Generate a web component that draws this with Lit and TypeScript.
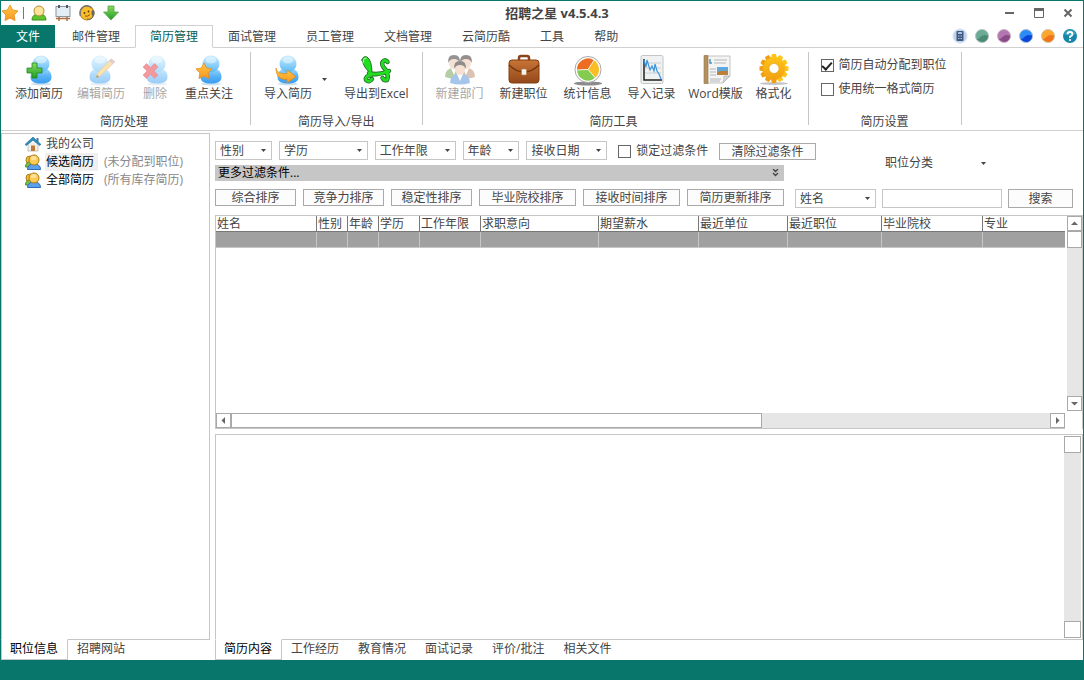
import { LitElement, html, svg, css, nothing, type SVGTemplateResult } from "lit";
import { customElement, state } from "lit/decorators.js";
import { classMap } from "lit/directives/class-map.js";
import { styleMap } from "lit/directives/style-map.js";

const person = (cx: number) => svg`
  <ellipse cx=${cx} cy="30" rx="10" ry="1.500" fill="#9cc4dc" opacity=".5"/>
  <path d=${`M${cx - 10.5} 23 C${cx - 10.5} 17 ${cx - 6} 14 ${cx} 14 S${cx + 10.5} 17 ${cx + 10.5} 23 C${cx + 10.5} 28 ${cx + 6} 29.5 ${cx} 29.5 S${cx - 10.5} 28 ${cx - 10.5} 23Z`} fill="url(#body)"/>
  <circle cx=${cx} cy="10" r="8.500" fill="url(#head)"/>
  <ellipse cx=${cx} cy="6" rx="5.500" ry="3.500" fill="#fff" opacity=".45"/>`;

const gold = (x: number, y: number, k: number) => svg`
  <path transform=${`translate(${x} ${y}) scale(${k})`} d="M8 0 L10.600 5 16 5.900 12.200 9.900 13 15.600 8 13.100 3 15.600 3.800 9.900 0 5.900 5.400 5Z" fill="url(#gold)" stroke="#e88a1c" stroke-width=".8" stroke-linejoin="round"/>`;

const smallUser = (hair: string, coat: string, x: number, y: number, w: number) => svg`
  <path d=${`M${x - w} ${y + 14} q0 -9 ${w} -9 t${w} 9 q${-w} 3 ${-2 * w} 0Z`} fill=${coat}/>
  <path d=${`M${x - 3} ${y + 5} l3 7 3 -7Z`} fill="#fff"/>
  <ellipse cx=${x} cy=${y} rx="5" ry="6" fill="#eec3a4"/>
  <path d=${`M${x - 5.5} ${y} q-1.5 -8 5.5 -8 t5.5 8 q-1 -4 -5.5 -4 t-5.500 4Z`} fill=${hair}/>`;

const SWIRL = "M9 19Q18 22 29 17M28 18Q20 11 23 7.500Q26 5 27.500 8M11 21Q5 22 6 26Q9 29 12 25M26 18Q29 22 27 26Q24 27 22.500 24";

const ICONS: Record<string, SVGTemplateResult> = {
  add: svg`${person(18)}<path d="M8 10h5v5h5v5h-5v5H8v-5H3v-5h5Z" transform="translate(1 -1)" fill="url(#green)" stroke="#1e8a1e" stroke-width=".8"/>`,
  edit: svg`${person(15)}<path d="M11 24l1.500-5L26 5l3.500 3L16 21.500Z" fill="#f5c869" stroke="#c79a4a" stroke-width=".8"/><path d="M24 7l2.500-2.500 3.500 3L27.500 10Z" fill="#c99ba5"/><path d="M11 24l1-3.200 2.200 2Z" fill="#444"/>`,
  remove: svg`${person(18)}<path d="M4 13l3.500-3.500 4 4 4-4L19 13l-4 4 4 4-3.500 3.500-4-4-4 4L4 21l4-4Z" fill="#e8343c" stroke="#c81c28" stroke-width=".6"/>`,
  star: svg`${person(18)}${gold(3, 9, 1)}`,
  import: svg`${person(16)}<path d="M4 14c1 5 5 6 11 5.500V16l9 6.500-9 6.500v-3.500C8 26 4 22 4 14Z" fill="url(#gold)" stroke="#d98a10" stroke-width=".7"/>`,
  excel: svg`<g stroke-linecap="round" stroke-linejoin="round"><path d=${SWIRL} fill="none" stroke="#28702a" stroke-width="4.500"/><path d="M2 6Q3 1.500 7 3Q12 6 12 20Q4 15 2 6Z" fill="#1fe01f" stroke="#28702a"/><path d=${SWIRL} fill="none" stroke="#22dd22" stroke-width="2.800"/><path d="M3 9Q3 4 6 4" fill="none" stroke="#d8ffd8"/></g>`,
  people: svg`${smallUser("#2c2c2c", "#6f9c50", 10, 9, 9)}${smallUser("#2c2420", "#b48a6c", 22, 9, 9)}${smallUser("#1e1e1e", "#4e8cd8", 16, 15, 10)}`,
  briefcase: svg`<path d="M11 7V4q0-2 2-2h6q2 0 2 2v3" fill="none" stroke="#8a451c" stroke-width="2.500"/><rect x="1" y="6" width="30" height="23" rx="3" fill="url(#brown)" stroke="#84400f"/><path d="M1 11q7 7 15 7t15-7" fill="none" stroke="#76380f" stroke-width="1.500"/><rect x="13.500" y="15" width="5" height="6" rx="1" fill="#f6f2e8" stroke="#b08050" stroke-width=".6"/>`,
  pie: svg`<ellipse cx="16" cy="29.500" rx="14" ry="2" fill="#8c8c8c"/><circle cx="16" cy="15.500" r="13" fill="#fff" stroke="#a8a8a8"/><path d="M16 15.500L5 16A11 11 0 0 1 22 6.300Z" fill="#ee6c22"/><path d="M16 15.500L22 6.300A11 11 0 0 1 23.300 23.800Z" fill="#fbbd25"/><path d="M16 15.500L5 16A11 11 0 0 0 23.300 23.800Z" fill="#84cc50"/><path d="M16 15.500L5 16M16 15.500l6-9.200M16 15.500l7.300 8.300" stroke="#fff" stroke-width=".8"/>`,
  chart: svg`<rect x="5" y="1.500" width="22" height="28" rx="1.500" fill="#eff1f2" stroke="#c4c4c4"/><path d="M8 9h17M8 14h17M8 19h17" stroke="#ccd0d3"/><path d="M8 5v21h18" fill="none" stroke="#222" stroke-width="1.500"/><path d="M8 6l2 7 1-7 3 10 2-4 2 5 1-7 2 7 2 3 2 5" fill="none" stroke="#3d93da" stroke-width="1.200"/>`,
  news: svg`<path d="M5 2h25v20l-7 7H5Z" fill="#f3f4f3" stroke="#c4c4c4"/><path d="M4 1.500h4v28H4Z" fill="#b3925f" stroke="#937444" stroke-width=".6"/><path d="M10 5v4h2" fill="none" stroke="#4b94c8" stroke-width="1.500"/><path d="M14 6h13M14 9h12M10 15h6M10 18h6M10 21h6M10 25h11M10 27h10" stroke="#b4b8b9"/><rect x="17" y="13" width="11" height="8" fill="#5ba9e0"/><path d="M17 18q5-2 11-1v4H17Z" fill="#be7f38"/><path d="M30 22h-6q0 4-1 7Z" fill="#d5d6d6" stroke="#aaa" stroke-width=".6"/>`,
  gear: svg`<ellipse cx="16" cy="29.500" rx="14" ry="1.500" fill="#c4c4c4"/><g fill="url(#gear)">${[0, 30, 60, 90, 120, 150].map(
    (a) => svg`<g transform=${`rotate(${a} 16 14.5)`}><path d="M13 4l1-4h4l1 4v21l-1 4h-4l-1-4Z"/></g>`
  )}<circle cx="16" cy="14.500" r="11"/></g><circle cx="16" cy="14.500" r="5" fill="#fff" stroke="#e09a10" stroke-width=".6"/>`,
};

const QUICK: [string, SVGTemplateResult][] = [
  ["联系人", svg`<path d="M1 15q0-6 7-6t7 6Z" fill="#5cc52c" stroke="#3c8f18"/><circle cx="8" cy="6" r="5" fill="#f9e49a" stroke="#b98b2c"/>`],
  ["日程", svg`<path d="M4 11v5M12 11v5M1 13.500h14" stroke="#b06c3c" stroke-width="1.500"/><rect x="1" y="1.500" width="14" height="10" fill="#e4edf4" stroke="#8a96a2"/><path d="M4 0v3M12 0v3" stroke="#4f5a63" stroke-width="2"/>`],
  ["客服", svg`<circle cx="8" cy="8" r="7" fill="#f9bd2a" stroke="#b07c18"/><path d="M1.500 11Q0 5 4 2t9 1" fill="none" stroke="#777" stroke-width="1.500"/><ellipse cx="14" cy="8" rx="1.500" ry="3" fill="#666"/><path d="M14 11q-1 4-6 3" fill="none" stroke="#666"/><circle cx="5.500" cy="8" r=".9" fill="#50380a"/><circle cx="9.500" cy="6.500" r=".9" fill="#50380a"/><path d="M6 11q3 1 5-1.500" fill="none" stroke="#8a5708"/>`],
  ["下载", svg`<path d="M5 1h6v6h4.500L8 15 .5 7H5Z" fill="url(#green)" stroke="#5ea04c" stroke-width=".8"/>`],
];

const BALLS = [
  { name: "绿色", rim: "#b3c4bc", top: "#6bab95", low: "#4b8a76" },
  { name: "紫色", rim: "#c9b3c6", top: "#b277b0", low: "#8a4c88" },
  { name: "蓝色", rim: "#a4bbdc", top: "#2d8bf5", low: "#0b45d8" },
  { name: "橙色", rim: "#d8c3a6", top: "#fba62c", low: "#f0741c" },
];

interface Tool { icon: string; label: string; off?: boolean; drop?: boolean }
const GROUPS: { title: string; kind: string; tools: Tool[] }[] = [
  { title: "简历处理", kind: "g-edit", tools: [
    { icon: "add", label: "添加简历" }, { icon: "edit", label: "编辑简历", off: true },
    { icon: "remove", label: "删除", off: true }, { icon: "star", label: "重点关注" } ] },
  { title: "简历导入/导出", kind: "g-io", tools: [
    { icon: "import", label: "导入简历", drop: true }, { icon: "excel", label: "导出到Excel" } ] },
  { title: "简历工具", kind: "g-tools", tools: [
    { icon: "people", label: "新建部门", off: true }, { icon: "briefcase", label: "新建职位" },
    { icon: "pie", label: "统计信息" }, { icon: "chart", label: "导入记录" },
    { icon: "news", label: "Word模版" }, { icon: "gear", label: "格式化" } ] },
];

const MENU = ["邮件管理", "简历管理", "面试管理", "员工管理", "文档管理", "云简历酷", "工具", "帮助"];
const FILTERS: [string, string][] = [["性别", "s"], ["学历", "l"], ["工作年限", "m"], ["年龄", "s"], ["接收日期", "m"]];
const SORTS = ["综合排序", "竞争力排序", "稳定性排序", "毕业院校排序", "接收时间排序", "简历更新排序"];
const COLUMNS: [string, number][] = [
  ["姓名", 101], ["性别", 31], ["年龄", 31], ["学历", 41], ["工作年限", 61], ["求职意向", 118],
  ["期望薪水", 100], ["最近单位", 89], ["最近职位", 94], ["毕业院校", 101], ["专业", 0],
];
const DETAILS = ["简历内容", "工作经历", "教育情况", "面试记录", "评价/批注", "相关文件"];

const usersIcon = svg`<circle cx="5" cy="6" r="4" fill="#f5bd3c" stroke="#b07a14"/><path d="M.5 13q0-5 5-5t5 5Z" fill="#7cc143" stroke="#4d8f1f"/><path d="M2.500 15.500q0-5.500 6.500-5.500t6.500 5.500Z" fill="#5ca0ec" stroke="#2f6cb8"/><circle cx="9" cy="6" r="5" fill="#fccb55" stroke="#b07a14"/><ellipse cx="8.500" cy="4" rx="3" ry="2" fill="#fff" opacity=".4"/>`;
const homeIcon = svg`<path d="M3 8v7h10V8L8 3.500Z" fill="#f2f0ea" stroke="#b8b8b0" stroke-width=".8"/><path d="M11.500 2h2v4h-2Z" fill="#4b7c94"/><path d="M0 8.500L8 1l8 7.500-1.500 1L8 4 1.500 9.500Z" fill="#2b8dc0" stroke="#1f6d98" stroke-width=".6"/><path d="M6 9.500h4V15H6Z" fill="#c07a3a"/>`;

@customElement("app-root")
export class AppRoot extends LitElement {
  @state() private menu = "简历管理";
  @state() private side = "职位信息";
  @state() private detail = "简历内容";

  static styles = css`
    :host {
      --teal: #08766a;
      --line: #c6c6c6;
      --edge: #a9a9a9;
      --ink: #444;
      display: flex;
      flex-direction: column;
      box-sizing: border-box;
      min-height: 100vh;
      background: #fff;
      border: 1px solid var(--teal);
      border-bottom: 0;
      color: var(--ink);
      font: 12px/16px "Open Sans", "Noto Sans CJK SC", sans-serif;
    }
    * { box-sizing: border-box; }
    svg { display: block; flex: none; }
    button, input, select { font: inherit; color: inherit; margin: 0; padding: 0; border-radius: 0; outline: 0; }
    button { border: 0; background: none; white-space: nowrap; }
    h1 { margin: 0; }

    .title { display: flex; align-items: center; height: 24px; padding: 0 1px; }
    .quick { display: flex; align-items: center; gap: 8px; }
    .bar { width: 1px; height: 12px; margin: 0 -1px 0 -3px; background: #777; }
    .caption { flex: 1; text-align: center; font-size: 13px; line-height: 24px; font-weight: 700; }
    .win { display: grid; place-items: center; width: 29px; height: 24px; }

    .menu { display: flex; height: 23px; }
    .tab { flex: none; padding: 0 15px; border-bottom: 1px solid #d0d0d0; line-height: 23px; }
    .file { background: var(--teal); color: #fff; border-color: var(--teal); }
    .gap { width: 2px; border-bottom: 1px solid #d0d0d0; }
    .tab.on { padding: 0 14px; border: 1px solid #d0d0d0; border-bottom-color: #fff; color: #075e54; line-height: 21px; }
    .balls { flex: 1; display: flex; justify-content: flex-end; align-items: center; gap: 6px; padding-right: 5px; border-bottom: 1px solid #d0d0d0; }

    .ribbon { display: flex; height: 83px; border-bottom: 1px solid #d0d0d0; }
    .group { display: flex; flex-direction: column; justify-content: space-between; padding: 6px 10px 0 7px; }
    .group.g-io { padding: 6px 6px 0; }
    .group.g-tools { padding: 6px 8px 0 5px; }
    .group.g-set { width: 152px; padding: 9px 12px 0; }
    .name { text-align: center; }
    .tools { display: flex; }
    .tool { display: flex; flex-direction: column; align-items: center; min-width: 46px; padding: 0 7px; }
    .g-tools .tool { min-width: 64px; padding: 0; }
    .g-tools .tool:last-child { min-width: 52px; }
    .tool:disabled { color: #a6a6a6; }
    .tool:disabled svg { opacity: .5; }
    .drop { width: 18px; padding: 24px 0 0 3px; align-self: flex-start; }
    .rule { width: 1px; height: 73px; margin-top: 4px; background: var(--line); }
    .checks { display: flex; flex-direction: column; gap: 8px; }
    .check { display: flex; align-items: center; gap: 5px; white-space: nowrap; }
    .check input { appearance: none; display: grid; place-items: center; width: 13px; height: 13px; border: 1px solid #666; background: #fff; }
    .check input:checked::after { content: ""; width: 4px; height: 8px; margin-bottom: 3px; border: solid #222; border-width: 0 2px 2px 0; transform: rotate(42deg); }

    .body { flex: 1; display: flex; gap: 5px; min-height: 0; }
    .side { flex: none; width: 209px; display: flex; flex-direction: column; padding-top: 2px; }
    .tree { flex: 1; margin: 0; padding: 1px 0 0 23px; list-style: none; border: 1px solid var(--line); border-bottom: 0; }
    .node { display: flex; align-items: center; height: 18px; gap: 5px; }
    .node b { font-weight: 400; color: #000; line-height: 18px; padding: 0 4px 0 1px; margin-left: -1px; }
    .node .sel { background: #f0f0f0; }
    .node i { font-style: normal; color: #888; margin-left: 1px; }

    .main { flex: 1; min-width: 0; display: flex; flex-direction: column; padding-top: 10px; }
    .filters { display: grid; grid-template-columns: 601px auto; align-items: center; justify-content: start; }
    .row { display: flex; gap: 7px; }
    .combo { display: grid; align-items: center; height: 19px; border: 1px solid var(--line); }
    .combo.s { width: 57px; } .combo.m { width: 81px; } .combo.l { width: 89px; }
    .combo select { grid-area: 1 / 1; appearance: none; width: 100%; height: 17px; border: 0; padding-left: 4px; background: transparent; }
    .combo svg { grid-area: 1 / 1; justify-self: end; margin-right: 5px; pointer-events: none; }
    .row .check { margin: 1px 3px 0 4px; }
    .push { height: 17px; line-height: 16px; width: 81px; border: 1px solid var(--edge); background: #fcfcfc; }
    .push.wide { width: 97px; }
    .row .clear { margin-top: 2px; margin-left: 1px; }
    .more { display: flex; align-items: center; justify-content: space-between; width: 569px; height: 16px; margin-top: 5px; padding: 0 5px 0 3px; background: #c6c6c6; color: #000; }
    .kind { display: flex; align-items: center; gap: 48px; margin: 4px 0 0 69px; }
    .sorts { margin-top: 8px; height: 19px; }
    .find { display: flex; gap: 6px; margin-left: 4px; }
    .find input { width: 120px; height: 19px; border: 1px solid var(--line); background: #fff; padding: 0 4px; }
    .find .push { width: 65px; height: 19px; line-height: 18px; }

    .list { flex: 215 0 0; display: grid; grid-template: 1fr 16px / 1fr 15px; gap: 2px; margin-top: 7px; border: 1px solid var(--line); border-bottom: 0; }
    table { width: 100%; align-self: start; table-layout: fixed; border-collapse: separate; border-spacing: 0; }
    th { height: 16px; padding: 0 0 0 1px; text-align: left; font-weight: 400; line-height: 15px; border-bottom: 1px solid #777; border-right: 1px solid #777; white-space: nowrap; }
    td { height: 16px; padding: 0; background: #a0a0a0; border-right: 1px solid var(--line); border-bottom: 1px solid var(--line); }
    th:last-child, td:last-child { border-right: 0; }
    .vbar { display: flex; flex-direction: column; background: #e6e6e6; }
    .hbar { display: flex; background: #e6e6e6; border-bottom: 1px solid var(--line); }
    .arrow { display: grid; place-items: center; width: 15px; height: 15px; flex: none; border: 1px solid var(--edge); background: #fff; }
    .thumb { border: 1px solid var(--edge); background: #fff; }
    .vbar .thumb { height: 17px; }
    .hbar .thumb { flex: 530; }
    .space { flex: 1; }
    .hbar .space { flex: 289; }
    .detail { flex: 204 0 0; display: flex; justify-content: flex-end; margin-top: 5px; padding: 1px; border: 1px solid var(--line); border-bottom: 0; }
    .detail .vbar { width: 17px; }

    .tabs { display: flex; height: 21px; }
    .pane { flex: none; padding: 0 10px 0 9px; border-top: 1px solid var(--line); line-height: 18px; padding-bottom: 2px; }
    .pane.on { padding: 0 9px 1px 8px; color: #000; border: 1px solid var(--line); border-top-color: #fff; }
    .rest { flex: 1; border-top: 1px solid var(--line); }
    .status { height: 20px; margin: 0 -1px; background: var(--teal); }
  `;

  private caret() {
    return html`<svg width="5" height="3" aria-hidden="true"><path d="M0 0h5L2.500 3Z" fill="#444" /></svg>`;
  }

  private combo(label: string, size: string) {
    return html`<span class="combo ${size}"><select aria-label=${label}><option>${label}</option></select>${this.caret()}</span>`;
  }

  private arrow(name: string, d: string) {
    return html`<button class="arrow" aria-label=${name}><svg width="7" height="7"><path d=${d} fill="#666" /></svg></button>`;
  }

  private panes(items: string[], current: string, pick: (v: string) => void) {
    return html`<nav class="tabs">
      ${items.map((t) => html`<button class=${classMap({ pane: true, on: t === current })} @click=${() => pick(t)}>${t}</button>`)}
      <span class="rest"></span>
    </nav>`;
  }

  render() {
    return html`
      <svg width="0" height="0" aria-hidden="true">
        <defs>
          <linearGradient id="head" x2="0" y2="1"><stop stop-color="#c5ecff" /><stop offset="1" stop-color="#5db9f5" /></linearGradient>
          <linearGradient id="body" x2="0" y2="1"><stop stop-color="#a4dcff" /><stop offset=".5" stop-color="#5cb4f8" /><stop offset="1" stop-color="#3a9bf0" /></linearGradient>
          <linearGradient id="gold" x2="0" y2="1"><stop stop-color="#ffc94a" /><stop offset="1" stop-color="#f8961e" /></linearGradient>
          <linearGradient id="green" x2="0" y2="1"><stop stop-color="#86dc60" /><stop offset="1" stop-color="#1f9c24" /></linearGradient>
          <linearGradient id="brown" x2="0" y2="1"><stop stop-color="#c87436" /><stop offset="1" stop-color="#93481a" /></linearGradient>
          <linearGradient id="gear" gradientUnits="userSpaceOnUse" x1="0" y1="0" x2="0" y2="29"><stop stop-color="#ffc818" /><stop offset="1" stop-color="#f09c10" /></linearGradient>
        </defs>
      </svg>
      <header class="title">
        <div class="quick">
          <svg width="16" height="16">${gold(0, 0, 1)}</svg>
          <span class="bar"></span>
          ${QUICK.map(([name, art]) => html`<button aria-label=${name}><svg width="16" height="16">${art}</svg></button>`)}
        </div>
        <h1 class="caption">招聘之星 v4.5.4.3</h1>
        <button class="win" aria-label="最小化"><svg width="10" height="10"><path d="M0 4h9v2H0Z" fill="#666" /></svg></button>
        <button class="win" aria-label="最大化"><svg width="10" height="10"><path d="M.5 .5h9v9h-9Z" fill="none" stroke="#666" /><path d="M0 0h10v3H0Z" fill="#666" /></svg></button>
        <button class="win" aria-label="关闭"><svg width="10" height="10"><path d="M1.500 1.500l7 7M8.500 1.500l-7 7" stroke="#666" stroke-width="2" /></svg></button>
      </header>

      <nav class="menu">
        <button class="tab file">文件</button><span class="gap"></span>
        ${MENU.map((m) => html`<button class=${classMap({ tab: true, on: m === this.menu })} @click=${() => (this.menu = m)}>${m}</button>`)}
        <div class="balls">
          <button aria-label="计算器"><svg width="16" height="16"><circle cx="8" cy="8" r="7" fill="#bfd3ec" stroke="#d9e3ef" /><rect x="4.500" y="3" width="7" height="10" rx="1" fill="#3e5882" /><path d="M6 5h4" stroke="#d6e4f5" stroke-width="1.500" /><path d="M6 8h4M6 10.500h4" stroke="#a9c0df" stroke-dasharray="1 .5" /></svg></button>
          ${BALLS.map((b) => html`<button aria-label=${b.name}><svg width="16" height="16"><circle cx="8" cy="8" r="6.500" fill=${b.top} stroke=${b.rim} /><path d="M2.500 11Q5 11 7 8.500T14 7.500Q14 12 10.500 13.500T2.500 11Z" fill=${b.low} /></svg></button>`)}
          <button aria-label="帮助"><svg width="16" height="16"><circle cx="8" cy="8" r="7" fill="#1784a8" /><path d="M2 6Q4 1.500 8 1.500T14 6Q8 9 2 6Z" fill="#4bb0cc" opacity=".6" /><path d="M5.500 6.300Q5.500 4 8 4t2.500 2.200Q10.500 7.500 8 8.800V10" fill="none" stroke="#fff" stroke-width="1.800" /><circle cx="8" cy="12" r="1.100" fill="#fff" /></svg></button>
        </div>
      </nav>

      <section class="ribbon">
        ${GROUPS.map((g) => html`
          <div class="group ${g.kind}">
            <div class="tools">
              ${g.tools.map((t) => html`
                <button class="tool" ?disabled=${!!t.off}><svg width="32" height="32">${ICONS[t.icon]}</svg>${t.label}</button>
                ${t.drop ? html`<button class="drop" aria-label="更多导入方式">${this.caret()}</button>` : nothing}`)}
            </div>
            <span class="name">${g.title}</span>
          </div>
          <span class="rule"></span>`)}
        <div class="group g-set">
          <div class="checks">
            <label class="check"><input type="checkbox" checked />简历自动分配到职位</label>
            <label class="check"><input type="checkbox" />使用统一格式简历</label>
          </div>
          <span class="name">简历设置</span>
        </div>
        <span class="rule"></span>
      </section>

      <div class="body">
        <aside class="side">
          <ul class="tree">
            <li class="node"><svg width="16" height="16">${homeIcon}</svg>我的公司</li>
            <li class="node"><svg width="16" height="16">${usersIcon}</svg><b class="sel">候选简历</b> <i>(未分配到职位)</i></li>
            <li class="node"><svg width="16" height="16">${usersIcon}</svg><b>全部简历</b> <i>(所有库存简历)</i></li>
          </ul>
          ${this.panes(["职位信息", "招聘网站"], this.side, (v) => (this.side = v))}
        </aside>

        <main class="main">
          <div class="filters">
            <div>
              <div class="row">
                ${FILTERS.map(([label, size]) => this.combo(label, size))}
                <label class="check"><input type="checkbox" />锁定过滤条件</label>
                <button class="push wide clear">清除过滤条件</button>
              </div>
              <button class="more">更多过滤条件...<svg width="7" height="8"><path d="M1 0l2.500 2.500L6 0M1 4l2.500 2.500L6 4" fill="none" stroke="#444" stroke-width="1.300" /></svg></button>
            </div>
            <button class="kind">职位分类${this.caret()}</button>
          </div>
          <div class="row sorts">
            ${SORTS.map((s) => html`<button class=${classMap({ push: true, wide: s.length > 5 })}>${s}</button>`)}
            <div class="find">${this.combo("姓名", "m")}<input type="text" aria-label="关键字" /><button class="push">搜索</button></div>
          </div>

          <div class="list">
            <table>
              <colgroup>${COLUMNS.map(([, w]) => html`<col style=${styleMap(w ? { width: `${w}px` } : {})} />`)}</colgroup>
              <thead><tr>${COLUMNS.map(([c]) => html`<th scope="col">${c}</th>`)}</tr></thead>
              <tbody><tr>${COLUMNS.map(() => html`<td></td>`)}</tr></tbody>
            </table>
            <div class="vbar">
              ${this.arrow("向上", "M0 5h7L3.500 1.500Z")}
              <span class="thumb"></span><span class="space"></span>
              ${this.arrow("向下", "M0 2h7L3.500 5.500Z")}
            </div>
            <div class="hbar">
              ${this.arrow("向左", "M5 0v7L1.500 3.500Z")}
              <span class="thumb"></span><span class="space"></span>
              ${this.arrow("向右", "M2 0v7l3.500-3.500Z")}
            </div>
          </div>

          <div class="detail"><div class="vbar"><span class="thumb"></span><span class="space"></span><span class="thumb"></span></div></div>
          ${this.panes(DETAILS, this.detail, (v) => (this.detail = v))}
        </main>
      </div>
      <footer class="status"></footer>
    `;
  }
}
